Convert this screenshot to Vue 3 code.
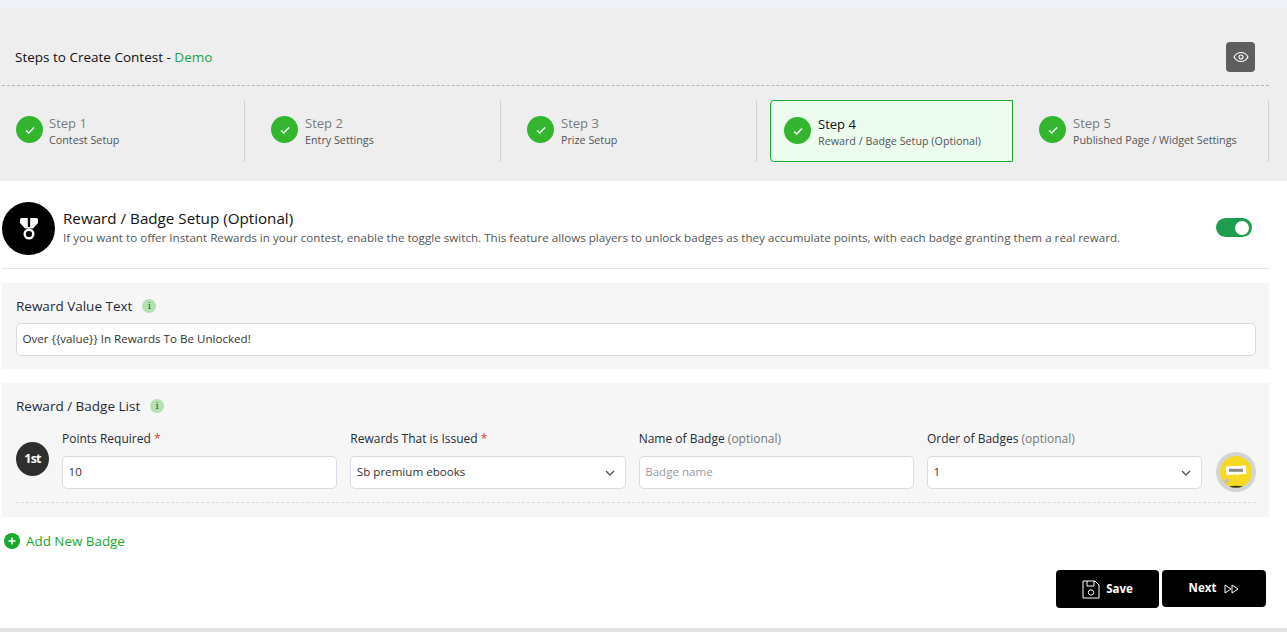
<script setup>
const steps = [
  { n: 1, sub: 'Contest Setup' },
  { n: 2, sub: 'Entry Settings' },
  { n: 3, sub: 'Prize Setup' },
  { n: 4, sub: 'Reward / Badge Setup (Optional)', active: true },
  { n: 5, sub: 'Published Page / Widget Settings' }
]
</script>

<template>
  <div class="page">
    <header class="head">
      <div class="title-row">
        <h1 class="title">Steps to Create Contest - <span class="green">Demo</span></h1>
        <button class="eye" aria-label="Preview">
          <svg width="16" height="16" viewBox="0 0 16 16" fill="none" stroke="#fff" stroke-width="1.1">
            <path d="M1 8c1.6-3 4-4.5 7-4.5S13.400 5 15 8c-1.600 3-4 4.500-7 4.500S2.600 11 1 8z" />
            <circle cx="8" cy="8" r="2" />
          </svg>
        </button>
      </div>
      <div class="steps">
        <div v-for="s in steps" :key="s.n" class="step" :class="{ active: s.active }">
          <div class="step-inner">
            <span class="tick">
              <svg width="12" height="12" viewBox="0 0 12 12" fill="none" stroke="#fff" stroke-width="1.500">
                <path d="M2 6.500l2.700 2.500L10 3.500" />
              </svg>
            </span>
            <div class="step-text">
              <div class="step-name">Step {{ s.n }}</div>
              <div class="step-sub">{{ s.sub }}</div>
            </div>
          </div>
        </div>
      </div>
    </header>

    <main class="main">
      <section class="intro">
        <span class="medal">
          <svg width="18" height="22" viewBox="0 0 18 22">
            <path d="M1.500 0h15A1.500 1.500 0 0 1 18 1.500V5l-5 5.500H5L0 5V1.500A1.500 1.500 0 0 1 1.500 0z" fill="#fff" />
            <rect x="7.800" y="0" width="2.400" height="9" fill="#000" />
            <circle cx="9" cy="16" r="4.300" fill="none" stroke="#fff" stroke-width="2.400" />
          </svg>
        </span>
        <div class="intro-text">
          <h2>Reward / Badge Setup (Optional)</h2>
          <p>If you want to offer Instant Rewards in your contest, enable the toggle switch. This feature allows players to unlock badges as they accumulate points, with each badge granting them a real reward.</p>
        </div>
        <span class="toggle"><span class="knob"></span></span>
      </section>

      <section class="panel value-panel">
        <div class="panel-label">Reward Value Text <span class="info">i</span></div>
        <div class="field">Over {&#8203;{value}&#8203;} In Rewards To Be Unlocked!</div>
      </section>

      <section class="panel list-panel">
        <div class="panel-label">Reward / Badge List <span class="info">i</span></div>
        <div class="badge-row">
          <span class="rank">1st</span>
          <div class="col">
            <label>Points Required <em>*</em></label>
            <div class="field">10</div>
          </div>
          <div class="col">
            <label>Rewards That is Issued <em>*</em></label>
            <div class="field select">Sb premium ebooks
              <svg class="chev" width="12" height="12" viewBox="0 0 12 12" fill="none" stroke="#4b5563" stroke-width="1.300"><path d="M2 4l4 4 4-4" /></svg>
            </div>
          </div>
          <div class="col">
            <label>Name of Badge <span class="opt">(optional)</span></label>
            <div class="field placeholder">Badge name</div>
          </div>
          <div class="col">
            <label>Order of Badges <span class="opt">(optional)</span></label>
            <div class="field select">1
              <svg class="chev" width="12" height="12" viewBox="0 0 12 12" fill="none" stroke="#4b5563" stroke-width="1.300"><path d="M2 4l4 4 4-4" /></svg>
            </div>
          </div>
          <span class="avatar">
            <svg width="40" height="40" viewBox="0 0 40 40">
              <circle cx="20" cy="20" r="20" fill="#d3d4d6" />
              <circle cx="20" cy="20" r="16" fill="#f5d923" />
              <path d="M13 34.500q7 2.500 14 0q-7-1.500-14 0z" fill="#333" />
              <path d="M10 14.500l20-1 .5 8.500-8 .5-1 1.500-1-1.500-10 .5z" fill="#fff" />
              <rect x="13" y="16.800" width="14" height="3" fill="#8a8a8c" />
              <path d="M7 29l4-2.500 2.500 1-1 2.500-3 1.500z" fill="#c4c2a6" />
            </svg>
          </span>
        </div>
      </section>

      <a class="add">
        <svg width="16" height="16" viewBox="0 0 16 16">
          <circle cx="8" cy="8" r="8" fill="#17aa2c" />
          <path d="M8 4.500v7M4.500 8h7" stroke="#fff" stroke-width="1.500" />
        </svg>
        Add New Badge
      </a>

      <div class="actions">
        <button class="btn save">
          <svg width="18" height="19" viewBox="0 0 18 19" fill="none" stroke="#fff" stroke-width="1">
            <path d="M1 1h12l4 4v13H1z" />
            <path d="M5 1v5h7V1" />
            <circle cx="9" cy="12.500" r="2.700" />
          </svg>
          <span class="btn-text">Save</span>
        </button>
        <button class="btn next">
          <span class="btn-text">Next</span>
          <svg width="15" height="10" viewBox="0 0 15 10" fill="none" stroke="#fff" stroke-width="1">
            <path d="M1 1l6 4-6 4zM8 1l6 4-6 4z" />
          </svg>
        </button>
      </div>
    </main>
    <div class="foot"></div>
  </div>
</template>

<style>
html, body { margin: 0; overflow: hidden; }
</style>

<style scoped>
.page {
  width: 1287px;
  height: 632px;
  display: flex;
  flex-direction: column;
  overflow: hidden;
  background: #fff;
  border-top: 8px solid #f0f2f8;
  box-sizing: border-box;
  font-family: "Open Sans", sans-serif;
  color: #1f2430;
}
.head {
  height: 173px;
  box-sizing: border-box;
  flex: none;
  background: #eee;
  padding: 0 18px 0 2px;
}
.title-row {
  height: 78px;
  box-sizing: border-box;
  border-bottom: 1px dashed #b5b5b5;
  display: flex;
  align-items: center;
  justify-content: space-between;
  padding: 21px 14px 0 13px;
}
.title { margin: 0; font-size: 13.500px; font-weight: 400; color: #111; line-height: 18px; }
.green { color: #1fa64a; }
.eye {
  width: 29px;
  height: 30px;
  padding: 0;
  border: 0;
  border-radius: 4px;
  background: #5e5e5e;
  display: flex;
  align-items: center;
  justify-content: center;
}
.steps { display: flex; margin: 14px 0 0 -2px; height: 62px; }
.step {
  width: 256px;
  height: 62px;
  box-sizing: border-box;
  border-right: 1px solid #cfd2da;
  padding: 16px 0 0 26px;
}
.step:first-child { width: 245px; padding-left: 16px; }
.step.active {
  border: 0;
  padding: 0 0 0 13px;
}
.step-inner { display: flex; align-items: flex-start; gap: 6px; }
.step-text { margin-top: -1px; }
.step:not(:first-child) .step-inner { gap: 7px; }
.step.active .step-inner {
  width: 243px;
  height: 62px;
  box-sizing: border-box;
  border: 1px solid #17aa2c;
  border-radius: 4px 0 0 4px;
  background: #ecfdf0;
  padding: 16px 0 0 13px;
}
.tick {
  width: 27px;
  height: 27px;
  flex: none;
  border-radius: 50%;
  background: #33b52e;
  display: flex;
  align-items: center;
  justify-content: center;
}
.step-name { font-size: 13px; line-height: 17px; color: #7b7b7b; }
.step-sub { font-size: 10.750px; line-height: 17px; color: #555; white-space: nowrap; }
.active .step-name { color: #111; }
.main { flex: 1; padding: 0 18px 0 2px; min-height: 0; }
.intro {
  height: 88px;
  box-sizing: border-box;
  border-bottom: 1px solid #e3e3e3;
  display: flex;
  align-items: flex-start;
  padding-top: 21px;
}
.medal {
  width: 53px;
  height: 53px;
  flex: none;
  border-radius: 50%;
  background: #000;
  display: flex;
  align-items: center;
  justify-content: center;
}
.intro-text { margin: 4px 0 0 8px; flex: 1; }
.intro-text h2 { margin: 0; font-size: 15.200px; line-height: 24px; font-weight: 400; color: #111; }
.intro-text p { margin: 0; font-size: 11.650px; line-height: 16px; color: #555; white-space: nowrap; }
.toggle {
  width: 36px;
  height: 19px;
  margin: 16px 17px 0 0;
  flex: none;
  border-radius: 10px;
  background: #1f9d4f;
  position: relative;
}
.knob {
  position: absolute;
  right: 3px;
  top: 2.500px;
  width: 14px;
  height: 14px;
  border-radius: 50%;
  background: #fff;
}
.panel { background: #f6f6f6; padding: 0 13px 0 14px; }
.value-panel { height: 86px; box-sizing: border-box; margin-top: 14px; padding-top: 14px; }
.list-panel { height: 134px; box-sizing: border-box; margin-top: 14px; padding-top: 14px; }
.panel-label {
  font-size: 13.500px;
  line-height: 18px;
  color: #252b38;
  display: flex;
  align-items: center;
  gap: 10px;
}
.info {
  width: 14px;
  height: 14px;
  border-radius: 50%;
  background: #b5e0b5;
  color: #2a5a2a;
  font-family: "DejaVu Serif", serif;
  font-size: 10px;
  line-height: 14px;
  text-align: center;
}
.field {
  height: 33px;
  box-sizing: border-box;
  border: 1px solid #d9d9e3;
  border-radius: 5px;
  background: #fff;
  padding: 0 5.500px;
  font-size: 11.600px;
  line-height: 30px;
  color: #333;
  position: relative;
  white-space: nowrap;
}
.value-panel .field { margin-top: 8px; }
.badge-row {
  margin-top: 15px;
  display: flex;
  align-items: flex-start;
  gap: 13px;
  height: 73px;
  box-sizing: border-box;
  border-bottom: 1px dashed #d6d6de;
}
.rank {
  width: 33px;
  height: 34px;
  margin-top: 12px;
  flex: none;
  border-radius: 50%;
  background: #2f2f2f;
  color: #fff;
  font-size: 12.500px;
  font-weight: 700;
  letter-spacing: -0.800px;
  line-height: 34px;
  text-align: center;
}
.col { width: 275.330px; flex: none; }
.col label { display: block; font-size: 12px; line-height: 17px; height: 26px; color: #252b38; }
.col em { font-style: normal; color: #e53935; }
.opt { color: #777; }
.placeholder { color: #9a9aa3; }
.chev { position: absolute; right: 9px; top: 10px; }
.avatar { width: 40px; height: 40px; margin: 22px 0 0 1px; flex: none; }
.add {
  margin: 16px 0 0 2px;
  display: flex;
  align-items: center;
  gap: 6px;
  height: 16px;
  font-size: 13.400px;
  color: #17aa2c;
}
.actions {
  display: flex;
  justify-content: flex-end;
  align-items: flex-start;
  gap: 3px;
  margin: 21px 3px 0 0;
}
.btn {
  border: 0;
  border-radius: 4px;
  background: #000;
  color: #fff;
  font-family: inherit;
  font-size: 11.500px;
  font-weight: 700;
  display: flex;
  align-items: center;
  justify-content: center;
}
.btn-text { margin-top: -2px; }
.save { width: 103px; height: 38px; gap: 6px; }
.next { width: 104px; height: 37px; gap: 8px; }
.foot { flex: none; height: 4px; background: #e4e4e4; }
</style>
